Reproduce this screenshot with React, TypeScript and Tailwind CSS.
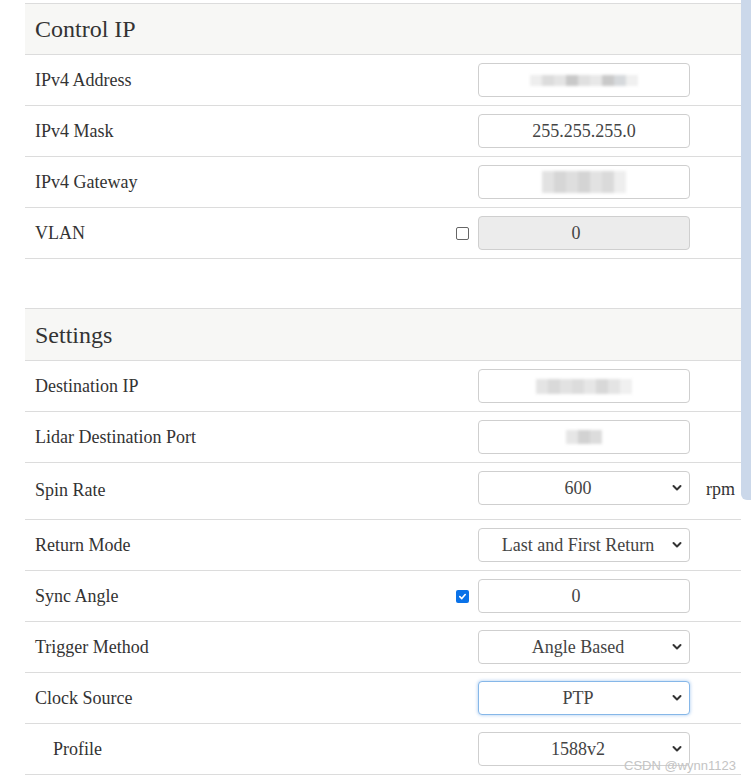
import type { ReactNode } from "react";

function Chevron() {
  return (
    <svg className="pointer-events-none absolute right-[7px] top-1/2 h-[8px] w-[10px] -translate-y-1/2" viewBox="0 0 10 8" fill="none">
      <path d="M1.5 2 L5 5.5 L8.5 2" stroke="#333" strokeWidth="2" strokeLinecap="round" strokeLinejoin="round" />
    </svg>
  );
}

function Box({ children, select, focus, disabled, num }: { children?: ReactNode; select?: boolean; focus?: boolean; disabled?: boolean; num?: boolean }) {
  return (
    <div
      className={`relative flex h-[34px] w-[212px] items-center justify-center rounded-[4px] border text-[18px] text-[#444] ${
        focus ? "border-[#86b7e8] shadow-[0_0_3px_1px_rgba(100,160,230,0.35)]" : "border-[#cfcfcf]"
      } ${disabled ? "bg-[#ececec]" : "bg-white"} ${select ? "pr-[12px]" : ""} ${num ? "pr-[16px]" : ""}`}
    >
      {children}
      {select && <Chevron />}
    </div>
  );
}

function Redacted({ blocks, h }: { blocks: string[]; h: number }) {
  return (
    <div className="flex blur-[1.5px]" style={{ height: h }}>
      {blocks.map((c, i) => (
        <div key={i} className="w-[12px]" style={{ backgroundColor: c }} />
      ))}
    </div>
  );
}

function Check({ checked }: { checked?: boolean }) {
  return checked ? (
    <div className="flex h-[13px] w-[13px] items-center justify-center rounded-[2px] bg-[#0a72e8]">
      <svg viewBox="0 0 10 10" className="h-[9px] w-[9px]" fill="none">
        <path d="M2 5.2 L4.2 7.3 L8 2.8" stroke="white" strokeWidth="1.8" strokeLinecap="round" strokeLinejoin="round" />
      </svg>
    </div>
  ) : (
    <div className="h-[13px] w-[13px] rounded-[2px] border border-[#666] bg-white" />
  );
}

function Row({ label, children, check, unit, indent, tall }: { label: string; children: ReactNode; check?: "on" | "off"; unit?: string; indent?: boolean; tall?: boolean }) {
  return (
    <div className={`flex border-b border-[#dcdcdc] ${tall ? "h-[57px] items-start pt-[8px]" : "h-[51px] items-center"}`}>
      <div className={`flex-1 text-[18px] text-[#333] ${indent ? "pl-[28px]" : "pl-[10px]"} ${tall ? "pt-[2px] leading-[34px]" : ""}`}>{label}</div>
      <div className="flex items-center gap-[9px]">
        {check && <Check checked={check === "on"} />}
        {children}
      </div>
      <div className={`w-[51px] pl-[16px] text-[18px] text-[#333] ${tall ? "pt-[1px] leading-[34px]" : ""}`}>{unit}</div>
    </div>
  );
}

function Header({ title, tall }: { title: string; tall?: boolean }) {
  return (
    <div className={`flex items-center border-y border-[#dcdcdc] bg-[#f7f7f5] pl-[10px] text-[24px] text-[#333] ${tall ? "h-[53px]" : "h-[52px]"}`}>
      {title}
    </div>
  );
}

export default function App() {
  return (
    <div className="relative h-[778px] w-[751px] overflow-hidden bg-white font-['Liberation_Serif',serif]">
      <div className="pl-[25px] pr-[10px] pt-[3px]">
        <Header title="Control IP" />
        <Row label="IPv4 Address">
          <Box>
            <Redacted h={11} blocks={["#eeeeee", "#dcdcdc", "#e4e4e4", "#c8c8c8", "#e0e0e0", "#e8e8e8", "#c9c9c9", "#d6d9dc", "#f0f0f0"]} />
          </Box>
        </Row>
        <Row label="IPv4 Mask">
          <Box>255.255.255.0</Box>
        </Row>
        <Row label="IPv4 Gateway">
          <Box>
            <Redacted h={22} blocks={["#e2e2e2", "#d6d6d6", "#dedede", "#d4d4d4", "#e2e2e2", "#dadada", "#eeeeee"]} />
          </Box>
        </Row>
        <Row label="VLAN" check="off">
          <Box disabled num>0</Box>
        </Row>
        <div className="h-[49px]" />
        <Header title="Settings" tall />
        <Row label="Destination IP">
          <Box>
            <Redacted h={15} blocks={["#e4e4e4", "#d9d9d9", "#e2e2e2", "#dcdcdc", "#e6e6e6", "#d8d8d8", "#e4e4e4", "#f0f0f0"]} />
          </Box>
        </Row>
        <Row label="Lidar Destination Port">
          <Box>
            <Redacted h={14} blocks={["#e6e6e6", "#d2d2d2", "#dcdcdc"]} />
          </Box>
        </Row>
        <Row label="Spin Rate" unit="rpm" tall>
          <Box select>600</Box>
        </Row>
        <Row label="Return Mode">
          <Box select>Last and First Return</Box>
        </Row>
        <Row label="Sync Angle" check="on">
          <Box num>0</Box>
        </Row>
        <Row label="Trigger Method">
          <Box select>Angle Based</Box>
        </Row>
        <Row label="Clock Source">
          <Box select focus>PTP</Box>
        </Row>
        <Row label="Profile" indent>
          <Box select>1588v2</Box>
        </Row>
      </div>
      <div className="absolute right-0 top-0 h-[500px] w-[10px] rounded-bl-[6px] bg-[#cbd8ea]" />
      <div className="absolute left-[624px] top-[756px] font-['Liberation_Sans',sans-serif] text-[13px] text-[#c4c4c4]">CSDN @wynn1123</div>
    </div>
  );
}
